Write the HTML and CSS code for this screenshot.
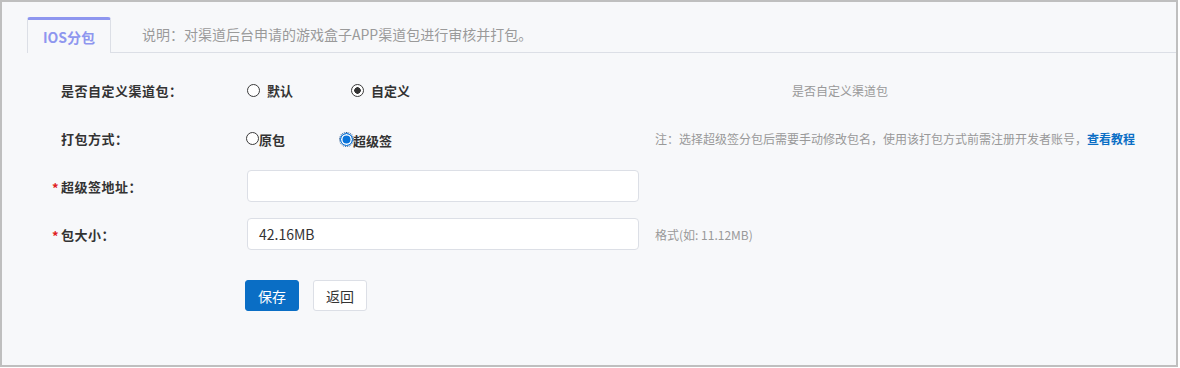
FILE: index.html
```html
<!DOCTYPE html>
<html lang="zh-CN">
<head>
<meta charset="utf-8">
<title>IOS分包</title>
<link rel="stylesheet" href="styles.css">
</head>
<body>
<div class="frame">
  <div class="tabs">
    <div class="tab">IOS分包</div>
    <div class="tab-rest">说明：对渠道后台申请的游戏盒子APP渠道包进行审核并打包。</div>
  </div>
  <div class="form">
    <div class="row">
      <div class="label"><span class="req"></span>是否自定义渠道包：</div>
      <div class="control">
        <label class="opt opt-wide"><span class="radio"></span><span class="opt-text gap">默认</span></label>
        <label class="opt opt-wide"><span class="radio dot"></span><span class="opt-text gap">自定义</span></label>
      </div>
      <div class="hint hint-far">是否自定义渠道包</div>
    </div>
    <div class="row">
      <div class="label"><span class="req"></span>打包方式：</div>
      <div class="control">
        <label class="opt opt-narrow"><span class="radio"></span><span class="opt-text">原包</span></label>
        <label class="opt opt-narrow"><span class="radio blue"></span><span class="opt-text">超级签</span></label>
      </div>
      <div class="hint">注：选择超级签分包后需要手动修改包名，使用该打包方式前需注册开发者账号，<a class="link">查看教程</a></div>
    </div>
    <div class="row">
      <div class="label"><span class="req">*</span>超级签地址：</div>
      <div class="control"><div class="input"></div></div>
    </div>
    <div class="row">
      <div class="label"><span class="req">*</span>包大小：</div>
      <div class="control"><div class="input">42.16MB</div></div>
      <div class="hint">格式(如: 11.12MB)</div>
    </div>
    <div class="actions">
      <button class="btn btn-primary">保存</button>
      <button class="btn">返回</button>
    </div>
  </div>
</div>
</body>
</html>
```
FILE: styles.css
```css
* { box-sizing: border-box; }
html, body { margin: 0; padding: 0; background: #ffffff; }
body {
  font-family: "Noto Sans CJK SC", "Microsoft YaHei", "Noto Sans", sans-serif;
  color: #333;
}
.frame {
  width: 1178px;
  height: 367px;
  border: 2px solid #bfbfbf;
  background: #f7f8fa;
}
.tabs {
  display: flex;
  margin-top: 15px;
  padding-left: 25px;
  height: 36px;
}
.tab {
  width: 84px;
  height: 36px;
  border-top: 3px solid #8e96ef;
  border-left: 1px solid #dcdfe6;
  border-right: 1px solid #dcdfe6;
  border-radius: 3px 3px 0 0;
  display: flex;
  align-items: center;
  justify-content: center;
  font-size: 14px;
  font-weight: 700;
  color: #8e96ef;
  padding-top: 1px;
}
.tab-rest {
  flex: 1;
  height: 36px;
  border-bottom: 1px solid #dcdfe6;
  display: flex;
  align-items: center;
  padding-left: 31px;
  font-size: 14px;
  color: #9a9a9a;
  padding-bottom: 1px;
}
.form { padding-top: 13px; }
.row {
  display: flex;
  align-items: center;
  height: 48px;
}
.label {
  width: 245px;
  padding-left: 50px;
  display: flex;
  align-items: center;
  font-size: 13px;
  font-weight: 700;
  letter-spacing: 0.5px;
  color: #333;
}
.req {
  width: 9px;
  color: #e02020;
  font-size: 13px;
  font-weight: 700;
  padding-top: 2px;
}
.control {
  width: 392px;
  display: flex;
  align-items: center;
}
.opt {
  display: flex;
  align-items: center;
  font-size: 13px;
  font-weight: 700;
  color: #333;
}
.opt-wide { width: 104px; }
.opt-narrow { width: 95px; margin-left: -1px; }
.opt-narrow + .opt-narrow { padding-top: 2px; }
.opt-narrow .opt-text { padding-top: 2px; }
.gap { margin-left: 7px; }
.radio {
  width: 13px;
  height: 13px;
  border-radius: 50%;
  border: 1px solid #3a3a3a;
  background: #fff;
  flex: none;
}
.radio.dot {
  background: radial-gradient(circle, #333 0 3px, #fff 3.5px);
}
.radio.blue {
  border: 1px solid #0a74da;
  background: #0a74da;
  box-shadow: inset 0 0 0 1.5px #fff;
  outline: 1px dotted #2a5a90;
  outline-offset: 0;
}
.hint {
  margin-left: 16px;
  font-size: 12px;
  color: #999;
}
.hint-far { margin-left: 153px; }
.link {
  color: #0a6ec5;
  font-weight: 700;
}
.input {
  width: 392px;
  height: 32px;
  background: #fff;
  border: 1px solid #dcdfe6;
  border-radius: 4px;
  padding-left: 11px;
  display: flex;
  align-items: center;
  font-size: 14px;
  color: #333;
}
.actions {
  display: flex;
  gap: 14px;
  margin-top: 22px;
  padding-left: 243px;
}
.btn {
  width: 54px;
  height: 31px;
  border: 1px solid #dcdfe6;
  border-radius: 3px;
  background: #fff;
  font-family: inherit;
  font-size: 14px;
  color: #333;
  padding: 0;
}
.btn-primary {
  background: #0a6ec5;
  border-color: #0a6ec5;
  color: #fff;
}
```
